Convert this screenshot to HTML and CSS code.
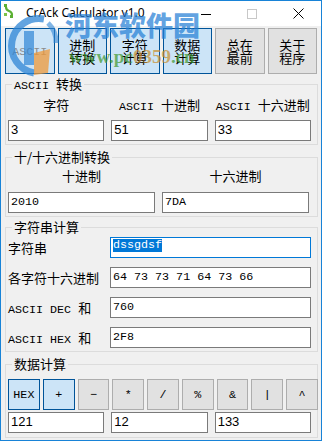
FILE: index.html
```html
<!DOCTYPE html>
<html lang="zh">
<head>
<meta charset="utf-8">
<title>CrAck Calculator v1.0</title>
<link rel="stylesheet" href="styles.css">
</head>
<body>
<div class="window">
  <div class="titlebar">
    <svg class="app-icon" width="10" height="14" viewBox="0 0 10 14">
      <rect x="0" y="0" width="3" height="3" fill="#5bb033"/>
      <path d="M2 3 Q2 6 5 7 Q8 8 8 11" stroke="#5bb033" stroke-width="2.2" fill="none"/>
      <rect x="0" y="9" width="3" height="3" fill="#7cc24a"/>
      <rect x="6" y="11" width="3" height="3" fill="#5bb033"/>
    </svg>
    <span class="title">CrAck Calculator v1.0</span>
    <div class="caps">
      <span class="cap"><svg width="10" height="10" viewBox="0 0 10 10"><path d="M0 5.5H10" stroke="#000" stroke-width="1"/></svg></span>
      <span class="cap"><svg width="10" height="10" viewBox="0 0 10 10"><rect x="0.5" y="0.5" width="9" height="9" fill="none" stroke="#c8c8c8" stroke-width="1"/></svg></span>
      <span class="cap"><svg width="11" height="11" viewBox="0 0 11 11"><path d="M0.5 0.5L10.5 10.5M10.5 0.5L0.5 10.5" stroke="#000" stroke-width="1"/></svg></span>
    </div>
  </div>

  <div class="client">
    <div class="toolbar">
      <button class="tb on"><span class="mono dim">ASCII</span></button>
      <button class="tb on">进制<br>转换</button>
      <button class="tb on">字符<br>计算</button>
      <button class="tb on">数据<br>计算</button>
      <button class="tb">总在<br>最前</button>
      <button class="tb">关于<br>程序</button>
    </div>

    <fieldset class="group g1">
      <legend><span class="mono">ASCII </span>转换</legend>
      <div class="cols3">
        <div class="collabel">字符</div>
        <div class="collabel"><span class="mono">ASCII </span>十进制</div>
        <div class="collabel"><span class="mono">ASCII </span>十六进制</div>
        <div class="field sans">3</div>
        <div class="field sans">51</div>
        <div class="field sans">33</div>
      </div>
    </fieldset>

    <fieldset class="group g2">
      <legend>十/十六进制转换</legend>
      <div class="cols2">
        <div class="collabel">十进制</div>
        <div class="collabel">十六进制</div>
        <div class="field mono">2010</div>
        <div class="field mono">7DA</div>
      </div>
    </fieldset>

    <fieldset class="group g3">
      <legend>字符串计算</legend>
      <div class="rows">
        <div class="rowlabel">字符串</div>
        <div class="field mono focus"><span class="sel">dssgdsf</span></div>
        <div class="rowlabel">各字符十六进制</div>
        <div class="field mono">64 73 73 71 64 73 66</div>
        <div class="rowlabel"><span class="mono">ASCII DEC </span>和</div>
        <div class="field mono">760</div>
        <div class="rowlabel"><span class="mono">ASCII HEX </span>和</div>
        <div class="field mono">2F8</div>
      </div>
    </fieldset>

    <fieldset class="group g4">
      <legend>数据计算</legend>
      <div class="ops">
        <button class="op on">HEX</button>
        <button class="op on">+</button>
        <button class="op">−</button>
        <button class="op">*</button>
        <button class="op">/</button>
        <button class="op">%</button>
        <button class="op">&amp;</button>
        <button class="op">|</button>
        <button class="op">^</button>
      </div>
      <div class="cols3 calc">
        <div class="field sans">121</div>
        <div class="field sans">12</div>
        <div class="field sans">133</div>
      </div>
    </fieldset>
  </div>

  <div class="watermark" aria-hidden="true">
    <svg class="wm-logo" width="56" height="64" viewBox="0 0 56 64">
      <path d="M40 6 A26 26 0 1 0 30 60" stroke="#2f86d6" stroke-width="7" fill="none" opacity="0.75"/>
      <path d="M44 10 A26 26 0 0 1 52 30" stroke="#2f86d6" stroke-width="5" fill="none" opacity="0.6"/>
      <rect x="20" y="18" width="10" height="34" fill="#2f86d6" opacity="0.7"/>
      <path d="M30 40 L46 36 L44 60 L30 62 Z" fill="#ef9a3a" opacity="0.75"/>
    </svg>
    <div class="wm-cn">河东软件园</div>
    <div class="wm-url"><span class="g">www.pc</span><span class="o">0359</span><span class="g">.cn</span></div>
  </div>
</div>
</body>
</html>
```

FILE: styles.css
```css
* { box-sizing: border-box; }
html, body { margin: 0; padding: 0; }
body {
  width: 322px;
  height: 441px;
  overflow: hidden;
  background: #fff;
  font-family: "Noto Sans CJK SC", "Noto Sans", sans-serif;
  font-size: 13px;
  color: #000;
}
.window {
  position: relative;
  width: 322px;
  height: 441px;
  border: 1px solid #1883d7;
  background: #f0f0f0;
  display: flex;
  flex-direction: column;
}
.titlebar {
  height: 25px;
  flex: none;
  background: #fff;
  display: flex;
  align-items: center;
}
.app-icon { margin-left: 3px; margin-top: -5px; flex: none; }
.title {
  margin-left: 12px;
  font-family: "Noto Sans", sans-serif;
  font-size: 12px;
  line-height: 16px;
  margin-top: -2px;
}
.caps { margin-left: auto; display: flex; height: 25px; }
.cap { width: 46px; display: flex; align-items: center; justify-content: center; }

.mono { font-family: "Liberation Mono", "Noto Sans CJK SC", monospace; font-size: 11.7px; }
.sans { font-family: "Liberation Sans", sans-serif; font-size: 13px; }
.dim { color: #8c8c8c; }

.client {
  flex: 1;
  display: flex;
  flex-direction: column;
  padding: 0 3px 0 4px;
}
.toolbar {
  margin-top: 2px;
  height: 46px;
  display: grid;
  grid-template-columns: repeat(6, 1fr);
  column-gap: 3px;
  padding-right: 1px;
}
button {
  font: inherit;
  color: #000;
  margin: 0;
  padding: 0;
  border: 1px solid #adadad;
  background: #e1e1e1;
  border-radius: 0;
}
button.on { background: #cce4f7; border-color: #005499; }
.tb { line-height: 13px; font-size: 13px; }

.group {
  margin: 0;
  min-width: 0;
  border: 1px solid #dcdcdc;
  padding: 0 6px 3px 2px;
}
.group legend {
  padding: 0 2px;
  margin-left: 4px;
  height: 12px;
  line-height: 12px;
  font-size: 13px;
}
.g1 { margin-top: 4px; padding-top: 7px; }
.g2 { margin-top: 6px; padding-top: 5px; padding-right: 8px; }
.g3 { margin-top: 4px; padding-top: 4px; }
.g4 { margin-top: 6px; padding-top: 9px; padding-right: 0; padding-bottom: 4px; }

.cols3 {
  display: grid;
  grid-template-columns: repeat(3, 1fr);
  column-gap: 7px;
}
.cols2 {
  display: grid;
  grid-template-columns: repeat(2, 1fr);
  column-gap: 7px;
}
.g1 .cols3 { grid-template-rows: 16px 21px; row-gap: 7px; }
.g2 .cols2 { grid-template-rows: 16px 21px; row-gap: 8px; }
.collabel {
  text-align: center;
  line-height: 16px;
  white-space: nowrap;
}
.field {
  height: 21px;
  background: #fff;
  border: 1px solid #7a7a7a;
  padding: 0 2px;
  line-height: 18px;
  white-space: nowrap;
  overflow: hidden;
}
.field.focus { border-color: #0078d7; }
.sel {
  display: inline-block;
  background: #0078d7;
  color: #fff;
  line-height: 13px;
  vertical-align: middle;
  margin-top: -2px;
}
.rows {
  display: grid;
  grid-template-columns: 102px 1fr;
  grid-auto-rows: 21px;
  row-gap: 9px;
}
.rowlabel {
  line-height: 21px;
  white-space: nowrap;
}
.ops {
  display: grid;
  grid-template-columns: repeat(9, 1fr);
  column-gap: 3px;
  height: 31px;
  margin-right: -1px;
}
.op {
  font-family: "Liberation Mono", monospace;
  font-size: 11.7px;
}
.calc { margin-top: 2px; margin-right: 6px; }

.watermark {
  position: absolute;
  left: 0;
  top: 0;
  width: 220px;
  height: 80px;
  pointer-events: none;
}
.wm-logo { position: absolute; left: 3px; top: 12px; }
.wm-cn {
  position: absolute;
  left: 64px;
  top: 7px;
  font-family: "Noto Sans CJK SC", sans-serif;
  font-weight: 900;
  font-size: 27px;
  line-height: 34px;
  color: rgba(38, 128, 214, 0.72);
  letter-spacing: 0;
}
.wm-url {
  position: absolute;
  left: 68px;
  top: 46px;
  font-family: "Liberation Serif", serif;
  font-weight: bold;
  font-size: 19px;
  line-height: 20px;
}
.wm-url .g { color: rgba(60, 150, 40, 0.7); }
.wm-url .o { color: rgba(200, 140, 40, 0.7); }
```
